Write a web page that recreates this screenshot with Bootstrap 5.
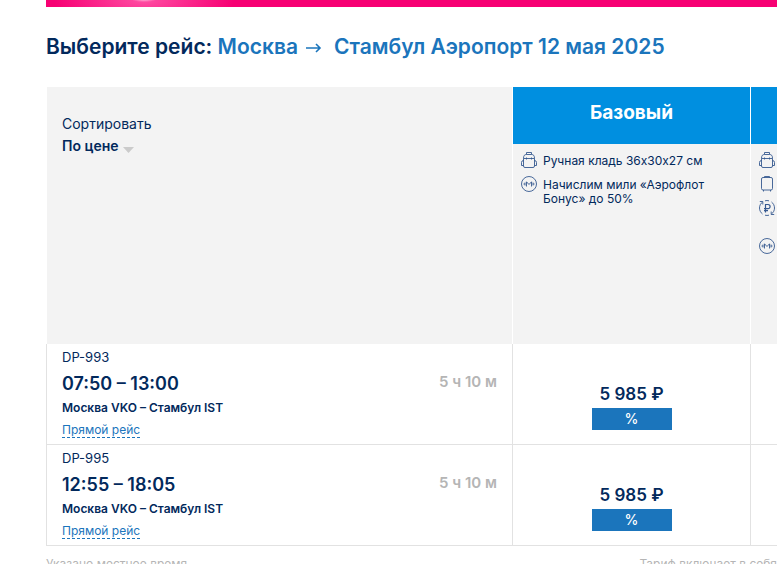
<!DOCTYPE html>
<html lang="ru">
<head>
<meta charset="utf-8">
<meta name="viewport" content="width=device-width, initial-scale=1">
<title>Выберите рейс</title>
<link href="https://cdn.jsdelivr.net/npm/bootstrap@5.3.0/dist/css/bootstrap.min.css" rel="stylesheet">
<style>
  body { font-family: Inter, "Open Sans", sans-serif; font-size: 14px; line-height: 18px; color: #02295c; }
  .page { padding-left: 46px; }
  .promo { height: 7px; background: radial-gradient(ellipse 12px 2px at 98px 0, #ff9fcd 0, transparent 100%), radial-gradient(ellipse 90px 30px at 98px 0, #ff4fa4 0, #f70073 100%) #f70073; }
  .title { font-size: 21px; line-height: 28px; font-weight: 600; margin: 26px 0; }
  .title span, .direct { color: #1b75bc; }
  .title svg { margin: 0 12px 0 7px; }
  .fares { table-layout: fixed; width: calc(100% + 212px); border-collapse: separate; border-spacing: 0; }
  .fare-col { width: 238px; }
  .fares th, .fares td { padding: 0; vertical-align: top; border-right: 1px solid #e2e2e2; font-weight: 400; }
  .fares > * > tr > :first-child { border-left: 1px solid #e2e2e2; }
  .fares thead th { background: #f3f3f3 padding-box; border-color: #fff; height: 257px; }
  .fares thead > tr > :first-child { border-left-color: #fff; }
  .fares td { border-bottom: 1px solid #e2e2e2; height: 101px; }
  .sorting { padding: 28px 15px 0; }
  .sorting select { appearance: none; font-weight: 600; color: inherit; line-height: 18px; }
  .fare-name { height: 57px; padding-top: 12px; background: #008fe0; color: #fff; font-size: 19px; line-height: 28px; font-weight: 700; text-align: center; }
  .perks { padding: 8px; font-size: 12px; line-height: 14px; }
  .perks li { display: flex; gap: 6px; min-height: 16px; margin-bottom: 8px; }
  .perks li.tall { min-height: 30px; }
  .perks span { padding-top: 2px; }
  .perks svg { flex: none; fill: none; stroke: #365990; stroke-width: 0.9; }
  .flight { padding: 4px 15px 5px; }
  .number { font-size: 13px; }
  .times { font-size: 18px; line-height: 24px; font-weight: 600; margin-top: 6px; }
  .route { font-size: 12px; line-height: 18px; font-weight: 600; margin-top: 3px; }
  .direct { font-size: 12px; line-height: 14px; border-bottom: 1px dashed; margin-top: 6px; }
  .duration { font-size: 15px; line-height: 22px; font-weight: 600; color: #b5b5b5; margin-top: 23px; }
  .price { font-size: 17px; line-height: 24px; font-weight: 600; padding-top: 38px; }
  .percent { width: 80px; height: 22px; background: #1b75bc; color: #fff; font-weight: 500; line-height: 20px; margin-top: 2px; }
  .notes { color: #b5b5b5; font-size: 12px; line-height: 16px; padding-top: 10px; }
</style>
</head>
<body class="overflow-x-hidden">
<svg width="0" height="0" class="position-absolute" aria-hidden="true">
  <symbol id="bag" viewBox="0 0 16 16">
    <path d="M5.500 2.500V.5h5v2M2.500 6.500C2.500 3.500 3.500 2.500 5.500 2.500h5c2 0 3 1 3 4M2.500 6.500h11M5.500 5.500v2M10.500 5.500v2M2.500 6.500V14q0 1.500 1.500 1.500h8q1.500 0 1.500-1.500V6.500M2.500 8.500q-2 0-2 2v3h2M13.500 8.500q2 0 2 2v3h-2"/>
  </symbol>
  <symbol id="case" viewBox="0 0 16 16">
    <path d="M5.500 2V.5h5V2M4 1.500h8q1.500 0 1.500 1.500v9.500q0 1.500-1.500 1.500H4q-1.500 0-1.500-1.500V3q0-1.500 1.500-1.500zM4.500 14v1.500M11.500 14v1.500"/>
  </symbol>
  <symbol id="refund" viewBox="0 0 16 16">
    <path d="M3.500 2A7.500 7.500 0 0 0 3.500 14M12.500 14A7.500 7.500 0 0 0 12.500 2M6 .8A7.500 7.500 0 0 1 10 .8M6 15.200A7.500 7.500 0 0 0 10 15.200M.8 1.500h3V4.500M15.200 14.500h-3V11.500"/>
    <path stroke-width="1.200" d="M6.500 12.500V4.500h2.500a2 2 0 0 1 0 4.200H5M5 10.700H9"/>
  </symbol>
  <symbol id="miles" viewBox="0 0 16 16">
    <circle cx="8" cy="8" r="7.500"/>
    <path d="M5.500 10.500V5.800L8 8.500l2.500-2.700V10.500M2.500 8h1.500M4 6.500v3M12 8h1.500M12 6.500v3"/>
  </symbol>
</svg>
<main class="page">
  <div class="promo"></div>
  <h1 class="title text-nowrap">Выберите рейс: <span>Москва<svg width="17" height="12" viewBox="0 0 17 12" fill="none" stroke="currentColor" stroke-width="1.6" role="img" aria-label="до"><path d="M1 6h14M11 2l4 4-4 4"/></svg>Стамбул Аэропорт 12 мая 2025</span></h1>
  <table class="fares">
    <colgroup><col><col class="fare-col"><col class="fare-col"></colgroup>
    <thead>
      <tr>
        <th>
          <div class="sorting">
            <label for="sort" class="d-block">Сортировать</label>
            <div class="d-flex align-items-center mt-1">
              <select id="sort" class="border-0 bg-transparent p-0"><option>По цене</option></select>
              <svg class="ms-1 mt-2" width="11" height="6" viewBox="0 0 11 6" fill="#cbcbcb" aria-hidden="true"><path d="M0 0h11L5.500 6z"/></svg>
            </div>
          </div>
        </th>
        <th>
          <div class="fare-name">Базовый</div>
          <ul class="perks list-unstyled mb-0">
            <li><svg width="16" height="16" aria-hidden="true"><use href="#bag"/></svg><span>Ручная кладь 36х30х27 см</span></li>
            <li><svg width="16" height="16" aria-hidden="true"><use href="#miles"/></svg><span>Начислим мили «Аэрофлот Бонус» до 50%</span></li>
          </ul>
        </th>
        <th>
          <div class="fare-name"></div>
          <ul class="perks list-unstyled mb-0">
            <li><svg width="16" height="16"><use href="#bag"/></svg></li>
            <li><svg width="16" height="16"><use href="#case"/></svg></li>
            <li class="tall"><svg width="16" height="16"><use href="#refund"/></svg></li>
            <li><svg width="16" height="16"><use href="#miles"/></svg></li>
          </ul>
        </th>
      </tr>
    </thead>
    <tbody>
      <tr>
        <td>
          <div class="flight d-flex justify-content-between">
            <div>
              <div class="number">DP-993</div>
              <div class="times">07:50 – 13:00</div>
              <div class="route">Москва VKO – Стамбул IST</div>
              <a href="#" class="direct d-inline-block text-decoration-none">Прямой рейс</a>
            </div>
            <div class="duration">5 ч 10 м</div>
          </div>
        </td>
        <td class="text-center">
          <div class="price">5 985 ₽</div>
          <button type="button" class="percent border-0 p-0">%</button>
        </td>
        <td></td>
      </tr>
      <tr>
        <td>
          <div class="flight d-flex justify-content-between">
            <div>
              <div class="number">DP-995</div>
              <div class="times">12:55 – 18:05</div>
              <div class="route">Москва VKO – Стамбул IST</div>
              <a href="#" class="direct d-inline-block text-decoration-none">Прямой рейс</a>
            </div>
            <div class="duration">5 ч 10 м</div>
          </div>
        </td>
        <td class="text-center">
          <div class="price">5 985 ₽</div>
          <button type="button" class="percent border-0 p-0">%</button>
        </td>
        <td></td>
      </tr>
    </tbody>
  </table>
  <div class="notes d-flex justify-content-between text-nowrap">
    <span>Указано местное время</span>
    <span>Тариф включает в себя</span>
  </div>
</main>
<script src="https://cdn.jsdelivr.net/npm/bootstrap@5.3.0/dist/js/bootstrap.bundle.min.js"></script>
</body>
</html>
